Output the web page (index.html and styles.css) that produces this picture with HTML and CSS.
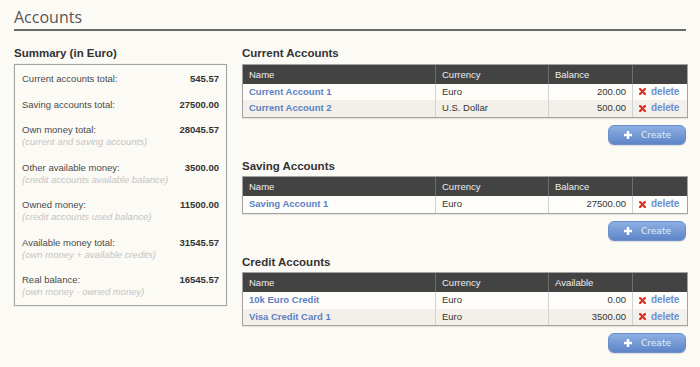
FILE: index.html
```html
<!DOCTYPE html>
<html>
<head>
<meta charset="utf-8">
<title>Accounts</title>
<link rel="stylesheet" href="styles.css">
</head>
<body>
<div class="page">
  <h1 class="title">Accounts</h1>
  <div class="columns">
    <div class="summary-col">
      <h2 class="heading">Summary (in Euro)</h2>
      <div class="summary">
        <div class="srow"><div class="stext"><div class="slabel">Current accounts total:</div></div><div class="sval">545.57</div></div>
        <div class="srow"><div class="stext"><div class="slabel">Saving accounts total:</div></div><div class="sval">27500.00</div></div>
        <div class="srow"><div class="stext"><div class="slabel">Own money total:</div><div class="snote">(current and saving accounts)</div></div><div class="sval">28045.57</div></div>
        <div class="srow"><div class="stext"><div class="slabel">Other available money:</div><div class="snote">(credit accounts available balance)</div></div><div class="sval">3500.00</div></div>
        <div class="srow"><div class="stext"><div class="slabel">Owned money:</div><div class="snote">(credit accounts used balance)</div></div><div class="sval">11500.00</div></div>
        <div class="srow"><div class="stext"><div class="slabel">Available money total:</div><div class="snote">(own money + available credits)</div></div><div class="sval">31545.57</div></div>
        <div class="srow"><div class="stext"><div class="slabel">Real balance:</div><div class="snote">(own money - owned money)</div></div><div class="sval">16545.57</div></div>
      </div>
    </div>
    <div class="accounts-col">
      <section class="acct">
        <h2 class="heading">Current Accounts</h2>
        <table class="grid">
          <colgroup><col class="c-name"><col class="c-cur"><col class="c-bal"><col class="c-act"></colgroup>
          <thead><tr><th>Name</th><th>Currency</th><th>Balance</th><th></th></tr></thead>
          <tbody>
            <tr><td><a class="name-link" href="#">Current Account 1</a></td><td>Euro</td><td class="num">200.00</td><td class="act"><a class="del" href="#"><svg class="x" viewBox="0 0 8 8" width="7" height="7"><path d="M1.2 1.2L6.8 6.8M6.8 1.2L1.2 6.8" stroke="#dc2f28" stroke-width="2.6" stroke-linecap="round"/></svg>delete</a></td></tr>
            <tr class="alt"><td><a class="name-link" href="#">Current Account 2</a></td><td>U.S. Dollar</td><td class="num">500.00</td><td class="act"><a class="del" href="#"><svg class="x" viewBox="0 0 8 8" width="7" height="7"><path d="M1.2 1.2L6.8 6.8M6.8 1.2L1.2 6.8" stroke="#dc2f28" stroke-width="2.6" stroke-linecap="round"/></svg>delete</a></td></tr>
          </tbody>
        </table>
        <div class="actions"><button class="create"><svg class="plus" viewBox="0 0 8 8" width="8" height="8"><path d="M4 0V8M0 4H8" stroke="#fff" stroke-width="2.4"/></svg><span>Create</span></button></div>
      </section>
      <section class="acct">
        <h2 class="heading">Saving Accounts</h2>
        <table class="grid">
          <colgroup><col class="c-name"><col class="c-cur"><col class="c-bal"><col class="c-act"></colgroup>
          <thead><tr><th>Name</th><th>Currency</th><th>Balance</th><th></th></tr></thead>
          <tbody>
            <tr><td><a class="name-link" href="#">Saving Account 1</a></td><td>Euro</td><td class="num">27500.00</td><td class="act"><a class="del" href="#"><svg class="x" viewBox="0 0 8 8" width="7" height="7"><path d="M1.2 1.2L6.8 6.8M6.8 1.2L1.2 6.8" stroke="#dc2f28" stroke-width="2.6" stroke-linecap="round"/></svg>delete</a></td></tr>
          </tbody>
        </table>
        <div class="actions"><button class="create"><svg class="plus" viewBox="0 0 8 8" width="8" height="8"><path d="M4 0V8M0 4H8" stroke="#fff" stroke-width="2.4"/></svg><span>Create</span></button></div>
      </section>
      <section class="acct">
        <h2 class="heading">Credit Accounts</h2>
        <table class="grid">
          <colgroup><col class="c-name"><col class="c-cur"><col class="c-bal"><col class="c-act"></colgroup>
          <thead><tr><th>Name</th><th>Currency</th><th>Available</th><th></th></tr></thead>
          <tbody>
            <tr><td><a class="name-link" href="#">10k Euro Credit</a></td><td>Euro</td><td class="num">0.00</td><td class="act"><a class="del" href="#"><svg class="x" viewBox="0 0 8 8" width="7" height="7"><path d="M1.2 1.2L6.8 6.8M6.8 1.2L1.2 6.8" stroke="#dc2f28" stroke-width="2.6" stroke-linecap="round"/></svg>delete</a></td></tr>
            <tr class="alt"><td><a class="name-link" href="#">Visa Credit Card 1</a></td><td>Euro</td><td class="num">3500.00</td><td class="act"><a class="del" href="#"><svg class="x" viewBox="0 0 8 8" width="7" height="7"><path d="M1.2 1.2L6.8 6.8M6.8 1.2L1.2 6.8" stroke="#dc2f28" stroke-width="2.6" stroke-linecap="round"/></svg>delete</a></td></tr>
          </tbody>
        </table>
        <div class="actions"><button class="create"><svg class="plus" viewBox="0 0 8 8" width="8" height="8"><path d="M4 0V8M0 4H8" stroke="#fff" stroke-width="2.4"/></svg><span>Create</span></button></div>
      </section>
    </div>
  </div>
</div>
</body>
</html>
```

FILE: styles.css
```css
html, body {
  margin: 0;
  padding: 0;
  background: #fcfaf5;
}
body {
  font-family: "Liberation Sans", Arial, sans-serif;
  font-size: 9.5px;
  color: #333;
}
.page {
  width: 672px;
  padding: 7px 14px 0;
}
.title {
  margin: 0;
  font-family: "Open Sans", "DejaVu Sans", sans-serif;
  font-weight: normal;
  font-size: 16px;
  line-height: 20px;
  color: #555;
  padding-bottom: 2px;
  border-bottom: 2px solid #6a6a6a;
}
.columns {
  display: flex;
  gap: 15px;
  margin-top: 15px;
  align-items: flex-start;
}
.summary-col {
  width: 213px;
  flex: none;
}
.accounts-col {
  width: 444px;
  flex: none;
}
.heading {
  margin: 0 0 3.5px;
  font-size: 11.5px;
  line-height: 14px;
  font-weight: bold;
  color: #333;
}
.summary {
  border: 1px solid #a3a3a3;
  box-shadow: 0 0 1px #c8c8c8;
  padding: 1.5px 7px 0;
}
.srow {
  display: flex;
  justify-content: space-between;
  align-items: flex-start;
  padding: 7px 0 6.5px;
  line-height: 12px;
}
.slabel {
  color: #4a4a4a;
}
.snote {
  color: #c4c4c4;
  font-style: italic;
}
.sval {
  font-weight: bold;
  color: #333;
}
.acct {
  margin-bottom: 14px;
}
.grid {
  width: 444px;
  table-layout: fixed;
  border-collapse: separate;
  border-spacing: 0;
  border: 1px solid #a3a3a3;
  box-shadow: 0 1px 1px rgba(0,0,0,0.08);
}
.c-name { width: 192px; }
.c-cur { width: 113px; }
.c-bal { width: 84px; }
.c-act { width: 55px; }
.grid th {
  background: #434343;
  color: #eee;
  font-weight: normal;
  text-align: left;
  height: 19px;
  padding: 0 6px;
  line-height: 19px;
  border-left: 1px solid #6e6e6e;
}
.grid th:first-child,
.grid td:first-child {
  border-left: none;
}
.grid td {
  height: 16px;
  padding: 0 6px;
  line-height: 16px;
  background: #fefdfa;
  border-left: 1px solid #d2d2d2;
  color: #333;
  white-space: nowrap;
}
.grid tr.alt td {
  background: #f3f0ea;
}
.grid td.num {
  text-align: right;
}
.grid td.act {
  padding: 0 0 0 6px;
}
.name-link {
  color: #5b81c4;
  font-weight: bold;
  text-decoration: none;
}
.del {
  color: #6b8fd2;
  text-decoration: none;
  display: inline-flex;
  align-items: center;
  gap: 5px;
  font-size: 10px;
  font-weight: bold;
  letter-spacing: -0.1px;
}
.x {
  display: block;
}
.actions {
  display: flex;
  justify-content: flex-end;
  margin-top: 7px;
}
.create {
  box-sizing: border-box;
  width: 78px;
  height: 20px;
  margin: 0;
  border: 1px solid #6a8ecb;
  border-radius: 6px;
  background: linear-gradient(#8db0e2, #5d85c8);
  display: flex;
  align-items: center;
  justify-content: center;
  gap: 9px;
  padding: 0 0 0 1px;
  font-family: "DejaVu Sans", Verdana, sans-serif;
  font-size: 9px;
  color: #e3ebf7;
  box-shadow: 0 1px 1px rgba(0,0,0,0.12);
}
.plus {
  display: block;
}
```
